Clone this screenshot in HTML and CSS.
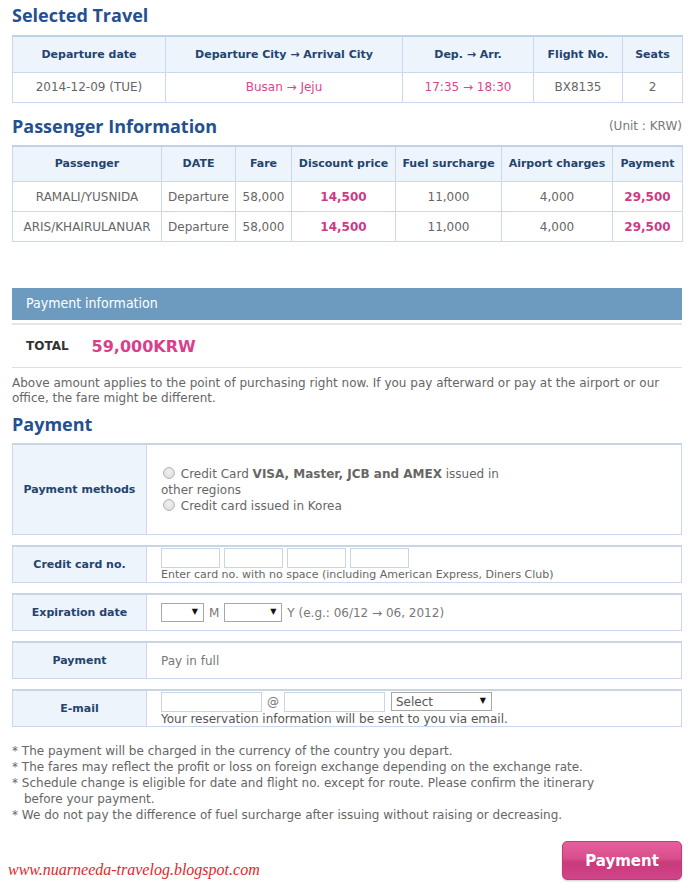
FILE: index.html
```html
<!DOCTYPE html>
<html>
<head>
<meta charset="utf-8">
<link rel="stylesheet" href="styles.css">
</head>
<body>
<div class="page">
  <h2 class="title first">Selected Travel</h2>
  <table class="grid t1">
    <colgroup><col class="c1"><col class="c2"><col class="c3"><col class="c4"><col class="c5"></colgroup>
    <thead>
      <tr><th>Departure date</th><th>Departure City → Arrival City</th><th>Dep. → Arr.</th><th>Flight No.</th><th>Seats</th></tr>
    </thead>
    <tbody>
      <tr><td>2014-12-09 (TUE)</td><td class="pink">Busan → Jeju</td><td class="pink">17:35 → 18:30</td><td>BX8135</td><td>2</td></tr>
    </tbody>
  </table>

  <div class="section-head">
    <h2 class="title">Passenger Information</h2>
    <span class="unit">(Unit : KRW)</span>
  </div>
  <table class="grid t2">
    <colgroup><col class="p1"><col class="p2"><col class="p3"><col class="p4"><col class="p5"><col class="p6"><col class="p7"></colgroup>
    <thead>
      <tr><th>Passenger</th><th>DATE</th><th>Fare</th><th>Discount price</th><th>Fuel surcharge</th><th>Airport charges</th><th>Payment</th></tr>
    </thead>
    <tbody>
      <tr><td>RAMALI/YUSNIDA</td><td>Departure</td><td>58,000</td><td class="pinkb">14,500</td><td>11,000</td><td>4,000</td><td class="pinkb">29,500</td></tr>
      <tr><td>ARIS/KHAIRULANUAR</td><td>Departure</td><td>58,000</td><td class="pinkb">14,500</td><td>11,000</td><td>4,000</td><td class="pinkb">29,500</td></tr>
    </tbody>
  </table>

  <div class="paybar">Payment information</div>
  <div class="total">
    <span class="total-label">TOTAL</span>
    <span class="total-value">59,000KRW</span>
  </div>
  <p class="notice">Above amount applies to the point of purchasing right now. If you pay afterward or pay at the airport or our office, the fare might be different.</p>

  <h2 class="title">Payment</h2>

  <div class="frow tall">
    <div class="flabel">Payment methods</div>
    <div class="fval">
      <div class="methods">
        <label><input type="radio" name="m" class="radio"> Credit Card <b>VISA, Master, JCB and AMEX</b> issued in other regions</label>
        <label><input type="radio" name="m" class="radio"> Credit card issued in Korea</label>
      </div>
    </div>
  </div>

  <div class="frow">
    <div class="flabel">Credit card no.</div>
    <div class="fval stack">
      <div class="inputs">
        <input class="box card" type="text">
        <input class="box card" type="text">
        <input class="box card" type="text">
        <input class="box card" type="text">
      </div>
      <div class="hint">Enter card no. with no space (including American Express, Diners Club)</div>
    </div>
  </div>

  <div class="frow">
    <div class="flabel">Expiration date</div>
    <div class="fval">
      <div class="inline">
        <span class="sel sel-m"><select></select></span>
        <span class="muted">M</span>
        <span class="sel sel-y"><select></select></span>
        <span class="muted">Y (e.g.: 06/12 → 06, 2012)</span>
      </div>
    </div>
  </div>

  <div class="frow">
    <div class="flabel">Payment</div>
    <div class="fval"><span class="muted">Pay in full</span></div>
  </div>

  <div class="frow">
    <div class="flabel">E-mail</div>
    <div class="fval stack">
      <div class="inline">
        <input class="box mail" type="text">
        <span class="at">@</span>
        <input class="box mail" type="text">
        <span class="sel sel-d"><select><option>Select</option></select></span>
      </div>
      <div class="hint dark">Your reservation information will be sent to you via email.</div>
    </div>
  </div>

  <ul class="notes">
    <li>The payment will be charged in the currency of the country you depart.</li>
    <li>The fares may reflect the profit or loss on foreign exchange depending on the exchange rate.</li>
    <li>Schedule change is eligible for date and flight no. except for route. Please confirm the itinerary before your payment.</li>
    <li>We do not pay the difference of fuel surcharge after issuing without raising or decreasing.</li>
  </ul>

  <div class="footer">
    <span class="watermark">www.nuarneeda-travelog.blogspot.com</span>
    <button class="paybtn">Payment</button>
  </div>
</div>
</body>
</html>
```

FILE: styles.css
```css
* { box-sizing: border-box; }
html, body { margin: 0; padding: 0; background: #fff; }
body {
  font-family: "DejaVu Sans", Verdana, sans-serif;
  font-size: 12px;
  color: #666;
}
.page {
  width: 692px;
  padding: 0 10px 0 12px;
}
.title {
  margin: 0;
  font-family: "Open Sans", "Noto Sans", sans-serif;
  font-size: 18px;
  font-weight: bold;
  line-height: 22px;
  color: #245091;
}
.title.first { padding-top: 4px; margin-bottom: 9px; }

.grid {
  width: 670px;
  border-collapse: collapse;
  table-layout: fixed;
  border-top: 2px solid #bfd2e8;
}
.grid th, .grid td {
  border: 1px solid #c9d8ea;
  text-align: center;
  padding: 0;
  white-space: nowrap;
}
.grid th {
  height: 36px;
  background: #eef4fc;
  color: #23446f;
  font-size: 11px;
  font-weight: bold;
}
.grid td {
  height: 30px;
  font-size: 12px;
  color: #666;
}
.grid tr:first-child th { border-top: 0; }
.t1 .c1 { width: 153px; }
.t1 .c2 { width: 237px; }
.t1 .c3 { width: 131px; }
.t1 .c4 { width: 89px; }
.t1 .c5 { width: 60px; }
.t2 .p1 { width: 149px; }
.t2 .p2 { width: 74px; }
.t2 .p3 { width: 56px; }
.t2 .p4 { width: 104px; }
.t2 .p5 { width: 106px; }
.t2 .p6 { width: 111px; }
.t2 .p7 { width: 70px; }
.grid td.pink { color: #d9468e; }
.grid td.pinkb { color: #cf3a86; font-weight: bold; }

.section-head {
  display: flex;
  justify-content: space-between;
  align-items: center;
  margin: 12px 0 8px;
}
.unit { color: #777; font-size: 12px; }

.paybar {
  margin-top: 46px;
  height: 32px;
  background: #6c9bbf;
  color: #fff;
  font-family: "Liberation Sans Narrow", "DejaVu Sans Condensed", "Roboto", sans-serif;
  font-size: 14px;
  line-height: 31px;
  padding-left: 14px;
}
.total {
  margin-top: 3px;
  border-top: 2px solid #e4e6e8;
  border-bottom: 1px solid #e0e0e0;
  height: 45px;
  display: flex;
  align-items: center;
  gap: 23px;
  padding-left: 14px;
}
.total-label {
  font-weight: bold;
  font-size: 12px;
  color: #333;
}
.total-value {
  font-weight: bold;
  font-size: 16px;
  color: #d9408c;
}
.notice {
  margin: 8px 0 7px;
  line-height: 15px;
  font-size: 12px;
  color: #666;
}

.frow {
  display: grid;
  grid-template-columns: 134px 1fr;
  min-height: 38px;
  border: 1px solid #c9d8ea;
  border-top: 2px solid #c9d5e3;
  margin-top: 10px;
}
.title + .frow { margin-top: 8px; }
.frow.tall { min-height: 92px; }
.flabel {
  background: #eef4fc;
  border-right: 1px solid #c9d8ea;
  color: #23446f;
  font-weight: bold;
  font-size: 11px;
  display: flex;
  align-items: center;
  justify-content: center;
}
.fval {
  padding-left: 14px;
  display: flex;
  align-items: center;
  color: #666;
}
.fval.stack {
  flex-direction: column;
  align-items: flex-start;
  justify-content: center;
}
.methods { max-width: 345px; }
.methods label { display: block; line-height: 16px; }
.methods b { font-weight: bold; color: #666; }
.radio {
  appearance: none;
  -webkit-appearance: none;
  width: 12px;
  height: 12px;
  margin: 0 2px 0 2px;
  vertical-align: -1px;
  border-radius: 50%;
  border: 1px solid #b8b8b8;
  background: radial-gradient(circle at 50% 40%, #f2f2f2 0, #d6d6d6 100%);
}
.inputs { display: flex; gap: 4px; }
.box {
  height: 20px;
  border: 1px solid #c9d5e3;
  background: #fff;
  padding: 0;
  margin: 0;
}
.card { width: 59px; }
.mail { width: 101px; }
.hint {
  font-size: 11px;
  line-height: 14px;
  color: #666;
}
.hint.dark { font-size: 12px; color: #555; }
.inline { display: flex; align-items: center; gap: 5px; }
.muted { color: #777; }
.at { color: #777; }
.sel {
  position: relative;
  display: inline-block;
  height: 19px;
}
.sel select {
  appearance: none;
  -webkit-appearance: none;
  width: 100%;
  height: 19px;
  border: 1px solid #a7a7a7;
  background: #fff;
  font-family: "DejaVu Sans", sans-serif;
  font-size: 12px;
  color: #555;
  padding: 0 0 0 4px;
  margin: 0;
}
.sel::after {
  content: "▼";
  position: absolute;
  right: 6px;
  top: 4px;
  font-size: 8px;
  line-height: 10px;
  color: #111;
  pointer-events: none;
}
.sel-m { width: 43px; }
.sel-y { width: 58px; }
.sel-d { width: 101px; margin-left: 1px; }

.notes {
  list-style: none;
  margin: 16px 0 0;
  padding: 0;
  max-width: 600px;
  line-height: 16px;
  font-size: 12px;
  color: #666;
}
.notes li { padding-left: 12px; text-indent: -12px; }
.notes li::before { content: "* "; }

.footer {
  display: flex;
  justify-content: space-between;
  align-items: flex-end;
  margin-top: 18px;
  margin-left: -4px;
  padding-bottom: 8px;
}
.watermark {
  font-family: "Liberation Serif", serif;
  font-style: italic;
  font-size: 16px;
  color: #e3262b;
  padding-bottom: 1px;
}
.paybtn {
  width: 120px;
  height: 39px;
  border: 1px solid #c23b78;
  border-radius: 5px;
  background: linear-gradient(#e6609c 0%, #d94d8c 45%, #c93a7a 55%, #d0448a 100%);
  color: #fff;
  font-family: "DejaVu Sans", sans-serif;
  font-weight: bold;
  font-size: 15px;
  box-shadow: 0 1px 2px rgba(0,0,0,0.2);
  padding: 0;
}
```
